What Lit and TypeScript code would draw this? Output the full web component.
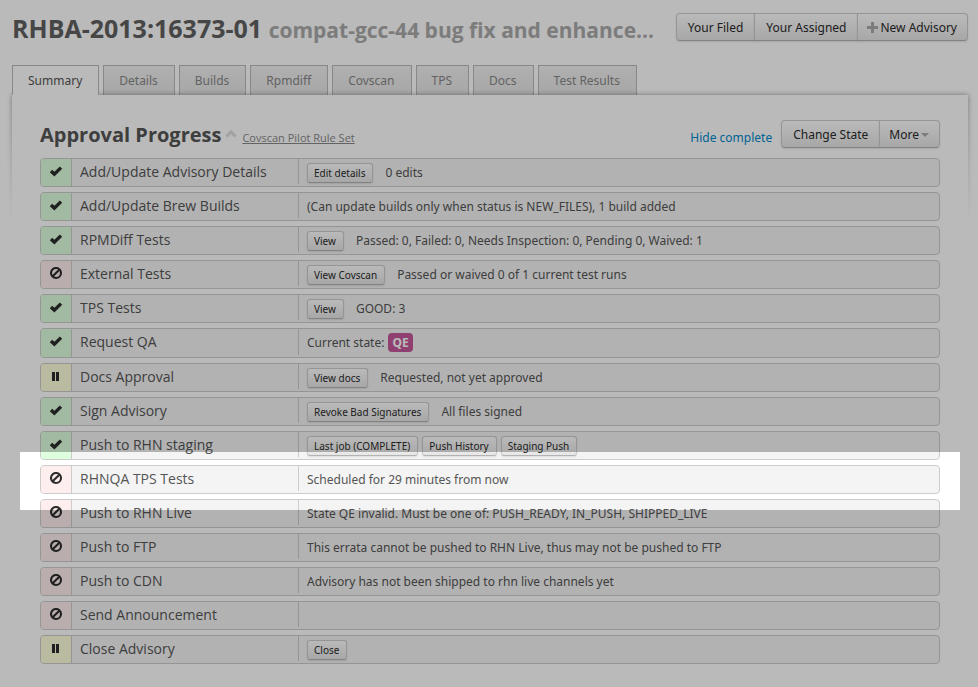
import { LitElement, html, css, svg, nothing, TemplateResult } from "lit";
import { customElement } from "lit/decorators.js";
import { classMap } from "lit/directives/class-map.js";

type Status = "done" | "blocked" | "waiting";

interface Step {
  status: Status;
  name: string;
  actions?: string[];
  note?: string;
  badge?: string;
  current?: boolean;
}

const TABS = ["Summary", "Details", "Builds", "Rpmdiff", "Covscan", "TPS", "Docs", "Test Results"];

const STEPS: Step[] = [
  { status: "done", name: "Add/Update Advisory Details", actions: ["Edit details"], note: "0 edits" },
  { status: "done", name: "Add/Update Brew Builds", note: "(Can update builds only when status is NEW_FILES), 1 build added" },
  { status: "done", name: "RPMDiff Tests", actions: ["View"], note: "Passed: 0, Failed: 0, Needs Inspection: 0, Pending 0, Waived: 1" },
  { status: "blocked", name: "External Tests", actions: ["View Covscan"], note: "Passed or waived 0 of 1 current test runs" },
  { status: "done", name: "TPS Tests", actions: ["View"], note: "GOOD: 3" },
  { status: "done", name: "Request QA", note: "Current state:", badge: "QE" },
  { status: "waiting", name: "Docs Approval", actions: ["View docs"], note: "Requested, not yet approved" },
  { status: "done", name: "Sign Advisory", actions: ["Revoke Bad Signatures"], note: "All files signed" },
  { status: "done", name: "Push to RHN staging", actions: ["Last job (COMPLETE)", "Push History", "Staging Push"] },
  { status: "blocked", name: "RHNQA TPS Tests", note: "Scheduled for 29 minutes from now", current: true },
  { status: "blocked", name: "Push to RHN Live", note: "State QE invalid. Must be one of: PUSH_READY, IN_PUSH, SHIPPED_LIVE" },
  { status: "blocked", name: "Push to FTP", note: "This errata cannot be pushed to RHN Live, thus may not be pushed to FTP" },
  { status: "blocked", name: "Push to CDN", note: "Advisory has not been shipped to rhn live channels yet" },
  { status: "blocked", name: "Send Announcement" },
  { status: "waiting", name: "Close Advisory", actions: ["Close"] },
];

const ICONS: Record<Status, TemplateResult> = {
  done: svg`<path d="M0.8 7.2 L3.2 4.8 L5.4 6.8 L10.8 1.4 L13.2 3.8 L5.4 11.6 Z" fill="#2c2c2c"/>`,
  blocked: svg`<circle cx="7" cy="6" r="5" fill="none" stroke="#2c2c2c" stroke-width="2.1"/><path d="M3.4 9.6 L10.6 2.4" stroke="#2c2c2c" stroke-width="2.1"/>`,
  waiting: svg`<path d="M3 2h3v9H3zM7 2h3v9H7z" fill="#2c2c2c"/>`,
};

const STATUS_TEXT: Record<Status, string> = { done: "Complete", blocked: "Blocked", waiting: "Waiting" };

@customElement("app-root")
export class AppRoot extends LitElement {
  static styles = css`
    :host {
      display: block;
      position: relative;
      overflow: hidden;
      min-height: 100vh;
      box-sizing: border-box;
      padding: 13px 10px 0 12px;
      background: #fff;
      color: #555;
      font: 12px/20px "Noto Sans", "Open Sans", sans-serif;
    }
    h1, h2, ol { margin: 0; padding: 0; }
    a { color: inherit; }
    button {
      margin: 0;
      font: inherit;
      color: #2a2a2a;
      cursor: pointer;
      border: 1px solid #ccc;
      border-bottom-color: #b3b3b3;
      background: linear-gradient(#fff, #e6e6e6);
      box-shadow: 0 1px 2px rgba(0, 0, 0, 0.1);
    }
    .top { display: flex; justify-content: space-between; align-items: flex-start; height: 32px; gap: 10px; }
    .title {
      flex: 1;
      min-width: 0;
      padding-bottom: 6px;
      font-family: "Open Sans", sans-serif;
      font-size: 25px;
      line-height: 30px;
      color: #606060;
      white-space: nowrap;
      overflow: hidden;
      text-overflow: ellipsis;
    }
    .title small { font-size: 21px; line-height: 24px; color: #aaa; }
    .group { display: flex; flex: none; }
    .group button { height: 28px; padding: 1px 11px 0; margin-left: -1px; white-space: nowrap; }
    .group button:first-child { border-radius: 4px 0 0 4px; margin-left: 0; }
    .group button:last-child { border-radius: 0 4px 4px 0; }
    .group .tight { padding: 1px 10px 0 9px; }
    .plus { width: 11px; height: 11px; margin-right: 2px; vertical-align: -1px; }
    .caret { width: 8px; height: 4px; margin-left: 2px; vertical-align: 2px; }
    .tabs { display: flex; gap: 4px; margin-top: 20px; }
    .tab {
      padding: 0 16px 0 15px;
      height: 29px;
      line-height: 29px;
      border: 1px solid #bbb;
      border-bottom: 0;
      background: linear-gradient(#f2f2f2, #e4e4e4);
      color: #888;
      text-decoration: none;
    }
    .tab.active { position: relative; z-index: 2; background: #fff; color: #555; }
    .panel { position: relative; }
    .shade {
      position: absolute;
      inset: -8px -8px auto;
      height: 136px;
      overflow: hidden;
      -webkit-mask-image: linear-gradient(#000 6%, transparent);
      mask-image: linear-gradient(#000 6%, transparent);
    }
    .edge { margin: 8px; height: 200px; box-shadow: 0 0 5px rgba(0, 0, 0, 0.4); }
    .content { position: relative; background: #fff; padding: 25px 28px 24px; }
    .bar { display: flex; align-items: center; height: 28px; margin-bottom: 10px; }
    .bar h2 { font-family: "Open Sans", sans-serif; font-size: 20px; line-height: 28px; padding-top: 2px; color: #555; }
    .fold { width: 12px; height: 8px; margin: 0 5px 0 4px; }
    .rule { font-family: "Open Sans", sans-serif; font-size: 11px; color: #888; padding-top: 8px; }
    .hide { margin-left: auto; margin-right: 9px; padding-top: 8px; color: #08c; text-decoration: none; }
    .steps { list-style: none; display: grid; gap: 5px; }
    .step {
      position: relative;
      display: grid;
      grid-template-columns: 31px 227px 1fr;
      min-height: 27px;
      border: 1px solid #ccc;
      border-radius: 4px;
      background: #f4f4f4;
    }
    .state { display: flex; justify-content: center; padding-top: 6px; border-right: 1px solid #ccc; border-radius: 3px 0 0 3px; box-sizing: border-box; }
    .state svg { width: 14px; height: 13px; }
    .done { background: #dfd; }
    .blocked { background: #fee; }
    .waiting { background: #ffd; }
    .name { padding-left: 8px; font-family: "Open Sans", sans-serif; font-size: 14px; line-height: 25px; border-right: 1px solid #ccc; margin-bottom: 2px; }
    .info { display: flex; align-items: center; gap: 4px; padding-left: 8px; }
    .info button { height: 20px; padding: 0 7px 0 6px; font-size: 10px; line-height: 16px; border-radius: 3px; }
    .info button + .note { margin-left: 8px; }
    .badge { background: #c5589a; color: #fff; font-weight: bold; border-radius: 4px; margin: 4px 0 5px; padding: 0 4px; line-height: 19px; }
    .spot {
      position: absolute;
      z-index: 3;
      inset: -14px -21px -17px;
      pointer-events: none;
      box-shadow: 0 0 0 2000px rgba(0, 0, 0, 0.27);
    }
  `;

  private step(s: Step) {
    return html`<li class="step">
      <span class="state ${s.status}">
        <svg viewBox="0 0 14 13" role="img" aria-label=${STATUS_TEXT[s.status]}>${ICONS[s.status]}</svg>
      </span>
      <span class="name">${s.name}</span>
      <div class="info">
        ${(s.actions ?? []).map((a) => html`<button type="button">${a}</button>`)}
        ${s.note ? html`<span class="note">${s.note}</span>` : nothing}
        ${s.badge ? html`<span class="badge">${s.badge}</span>` : nothing}
      </div>
      ${s.current ? html`<div class="spot"></div>` : nothing}
    </li>`;
  }

  render() {
    return html`
      <header class="top">
        <h1 class="title">RHBA-2013:16373-01 <small>compat-gcc-44 bug fix and enhance…</small></h1>
        <div class="group">
          <button type="button">Your Filed</button>
          <button type="button">Your Assigned</button>
          <button type="button" class="tight"><svg class="plus" viewBox="0 0 11 11"><path d="M4 0h3v4h4v3H7v4H4V7H0V4h4z" fill="#aaa"/></svg>New Advisory</button>
        </div>
      </header>
      <nav class="tabs">
        ${TABS.map((t, i) => html`<a href="#" class=${classMap({ tab: true, active: i === 0 })}>${t}</a>`)}
      </nav>
      <main class="panel">
        <div class="shade"><div class="edge"></div></div>
        <div class="content">
          <div class="bar">
            <h2>Approval Progress</h2>
            <svg class="fold" viewBox="0 0 12 8"><path d="M1.5 6.5 L6 2 L10.5 6.5" fill="none" stroke="#ddd" stroke-width="3"/></svg>
            <a class="rule" href="#">Covscan Pilot Rule Set</a>
            <a class="hide" href="#">Hide complete</a>
            <div class="group">
              <button type="button">Change State</button>
              <button type="button" class="tight">More<svg class="caret" viewBox="0 0 8 4"><path d="M0 0h8L4 4z" fill="#aaa"/></svg></button>
            </div>
          </div>
          <ol class="steps">${STEPS.map((s) => this.step(s))}</ol>
        </div>
      </main>
    `;
  }
}
